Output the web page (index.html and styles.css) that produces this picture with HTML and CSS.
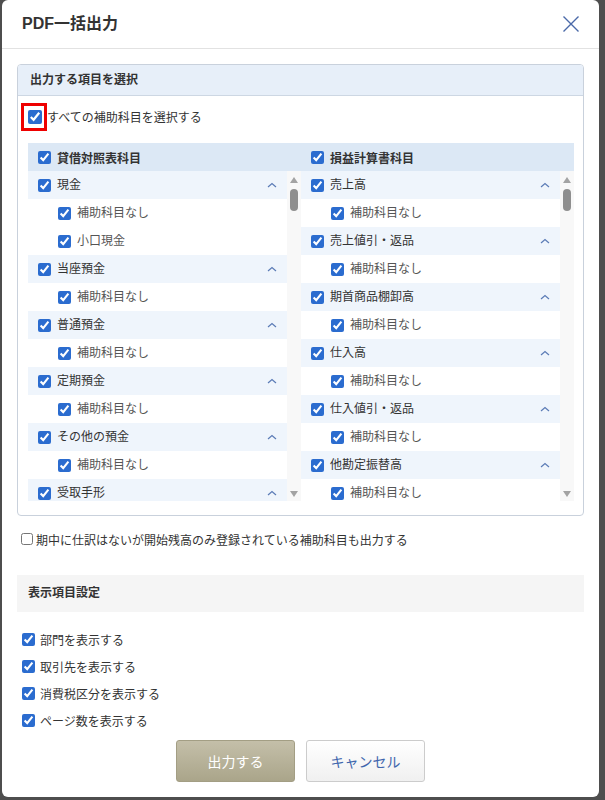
FILE: index.html
```html
<!DOCTYPE html>
<html lang="ja">
<head>
<meta charset="utf-8">
<title>PDF一括出力</title>
<link rel="stylesheet" href="styles.css">
</head>
<body>
<div class="modal">
  <div class="modal-header">
    <h1 class="modal-title">PDF一括出力</h1>
    <svg class="close" width="18" height="18" viewBox="0 0 18 18"><path d="M1.5 1.5 L16.5 16.5 M16.5 1.5 L1.5 16.5" stroke="#4a69a8" stroke-width="1.4" fill="none"/></svg>
  </div>
  <div class="modal-body">
    <div class="panel">
      <div class="panel-head">出力する項目を選択</div>
      <div class="select-all">
        <span class="highlight"><input type="checkbox" checked></span>
        <span class="label">すべての補助科目を選択する</span>
      </div>
      <div class="columns">
        <div class="col">
          <div class="col-head"><input type="checkbox" checked><span>貸借対照表科目</span></div>
          <div class="col-body">
            <div class="list">
              <div class="row group"><input type="checkbox" checked><span class="txt">現金</span><svg class="chev" width="10" height="6" viewBox="0 0 10 6"><polyline points="1,5 5,1.5 9,5" fill="none" stroke="#5b7cb6" stroke-width="1.2"/></svg></div>
              <div class="row child"><input type="checkbox" checked><span class="txt">補助科目なし</span></div>
              <div class="row child"><input type="checkbox" checked><span class="txt">小口現金</span></div>
              <div class="row group"><input type="checkbox" checked><span class="txt">当座預金</span><svg class="chev" width="10" height="6" viewBox="0 0 10 6"><polyline points="1,5 5,1.5 9,5" fill="none" stroke="#5b7cb6" stroke-width="1.2"/></svg></div>
              <div class="row child"><input type="checkbox" checked><span class="txt">補助科目なし</span></div>
              <div class="row group"><input type="checkbox" checked><span class="txt">普通預金</span><svg class="chev" width="10" height="6" viewBox="0 0 10 6"><polyline points="1,5 5,1.5 9,5" fill="none" stroke="#5b7cb6" stroke-width="1.2"/></svg></div>
              <div class="row child"><input type="checkbox" checked><span class="txt">補助科目なし</span></div>
              <div class="row group"><input type="checkbox" checked><span class="txt">定期預金</span><svg class="chev" width="10" height="6" viewBox="0 0 10 6"><polyline points="1,5 5,1.5 9,5" fill="none" stroke="#5b7cb6" stroke-width="1.2"/></svg></div>
              <div class="row child"><input type="checkbox" checked><span class="txt">補助科目なし</span></div>
              <div class="row group"><input type="checkbox" checked><span class="txt">その他の預金</span><svg class="chev" width="10" height="6" viewBox="0 0 10 6"><polyline points="1,5 5,1.5 9,5" fill="none" stroke="#5b7cb6" stroke-width="1.2"/></svg></div>
              <div class="row child"><input type="checkbox" checked><span class="txt">補助科目なし</span></div>
              <div class="row group"><input type="checkbox" checked><span class="txt">受取手形</span><svg class="chev" width="10" height="6" viewBox="0 0 10 6"><polyline points="1,5 5,1.5 9,5" fill="none" stroke="#5b7cb6" stroke-width="1.2"/></svg></div>
            </div>
            <div class="scrollbar"><span class="arrow-up"></span><span class="thumb"></span><span class="spacer"></span><span class="arrow-down"></span></div>
          </div>
        </div>
        <div class="col">
          <div class="col-head"><input type="checkbox" checked><span>損益計算書科目</span></div>
          <div class="col-body">
            <div class="list">
              <div class="row group"><input type="checkbox" checked><span class="txt">売上高</span><svg class="chev" width="10" height="6" viewBox="0 0 10 6"><polyline points="1,5 5,1.5 9,5" fill="none" stroke="#5b7cb6" stroke-width="1.2"/></svg></div>
              <div class="row child"><input type="checkbox" checked><span class="txt">補助科目なし</span></div>
              <div class="row group"><input type="checkbox" checked><span class="txt">売上値引・返品</span><svg class="chev" width="10" height="6" viewBox="0 0 10 6"><polyline points="1,5 5,1.5 9,5" fill="none" stroke="#5b7cb6" stroke-width="1.2"/></svg></div>
              <div class="row child"><input type="checkbox" checked><span class="txt">補助科目なし</span></div>
              <div class="row group"><input type="checkbox" checked><span class="txt">期首商品棚卸高</span><svg class="chev" width="10" height="6" viewBox="0 0 10 6"><polyline points="1,5 5,1.5 9,5" fill="none" stroke="#5b7cb6" stroke-width="1.2"/></svg></div>
              <div class="row child"><input type="checkbox" checked><span class="txt">補助科目なし</span></div>
              <div class="row group"><input type="checkbox" checked><span class="txt">仕入高</span><svg class="chev" width="10" height="6" viewBox="0 0 10 6"><polyline points="1,5 5,1.5 9,5" fill="none" stroke="#5b7cb6" stroke-width="1.2"/></svg></div>
              <div class="row child"><input type="checkbox" checked><span class="txt">補助科目なし</span></div>
              <div class="row group"><input type="checkbox" checked><span class="txt">仕入値引・返品</span><svg class="chev" width="10" height="6" viewBox="0 0 10 6"><polyline points="1,5 5,1.5 9,5" fill="none" stroke="#5b7cb6" stroke-width="1.2"/></svg></div>
              <div class="row child"><input type="checkbox" checked><span class="txt">補助科目なし</span></div>
              <div class="row group"><input type="checkbox" checked><span class="txt">他勘定振替高</span><svg class="chev" width="10" height="6" viewBox="0 0 10 6"><polyline points="1,5 5,1.5 9,5" fill="none" stroke="#5b7cb6" stroke-width="1.2"/></svg></div>
              <div class="row child"><input type="checkbox" checked><span class="txt">補助科目なし</span></div>
            </div>
            <div class="scrollbar"><span class="arrow-up"></span><span class="thumb"></span><span class="spacer"></span><span class="arrow-down"></span></div>
          </div>
        </div>
      </div>
    </div>

    <label class="opt-row"><input type="checkbox"><span>期中に仕訳はないが開始残高のみ登録されている補助科目も出力する</span></label>

    <div class="section-head">表示項目設定</div>

    <div class="display-list">
      <label class="disp-row"><input type="checkbox" checked><span>部門を表示する</span></label>
      <label class="disp-row"><input type="checkbox" checked><span>取引先を表示する</span></label>
      <label class="disp-row"><input type="checkbox" checked><span>消費税区分を表示する</span></label>
      <label class="disp-row"><input type="checkbox" checked><span>ページ数を表示する</span></label>
    </div>

    <div class="buttons">
      <button class="btn btn-primary">出力する</button>
      <button class="btn btn-cancel">キャンセル</button>
    </div>
  </div>
</div>
</body>
</html>
```

FILE: styles.css
```css
* { box-sizing: border-box; }

html, body {
  margin: 0;
  padding: 0;
}

body {
  background: #4e4e4e;
  font-family: "Liberation Sans", "Noto Sans CJK JP", sans-serif;
  color: #333;
  font-size: 12px;
  width: 605px;
  height: 800px;
  overflow: hidden;
}

input[type="checkbox"] {
  width: 13px;
  height: 13px;
  margin: 0;
  accent-color: #2b6ccf;
  flex: none;
}

.modal {
  margin-left: 2px;
  width: 597px;
  height: 797px;
  background: #fff;
  border-radius: 6px;
  display: flex;
  flex-direction: column;
}

.modal-header {
  height: 49px;
  border-bottom: 1px solid #e2e2e2;
  display: flex;
  align-items: center;
  justify-content: space-between;
  padding: 0 19px 0 20px;
}

.modal-title {
  margin: 0;
  font-size: 16px;
  font-weight: bold;
  color: #333;
  line-height: 20px;
}

.close { display: block; }

.modal-body {
  padding: 15px 15px 0;
  display: flex;
  flex-direction: column;
}

.panel {
  border: 1px solid #c9d1dc;
  border-radius: 4px;
  padding-bottom: 14px;
}

.panel-head {
  height: 31px;
  background: #e7eff9;
  border-bottom: 1px solid #cdd7e3;
  border-radius: 3px 3px 0 0;
  padding-left: 12px;
  font-weight: bold;
  font-size: 12px;
  line-height: 31px;
  color: #333;
}

.select-all {
  display: flex;
  align-items: center;
  padding: 7px 3px 0;
}

.highlight {
  display: flex;
  border: 3px solid #ee0000;
  padding: 4px 2px 4px 4px;
}

.highlight input {
  width: 14px;
  height: 14px;
}

.select-all .label {
  font-size: 12px;
  line-height: 16px;
  color: #333;
  position: relative;
  top: 1px;
}

.columns {
  margin: 12px 10px 0;
  display: grid;
  grid-template-columns: 273px 273px;
}

.col-head {
  height: 28px;
  background: #dce8f5;
  display: flex;
  align-items: center;
  gap: 6px;
  padding-left: 10px;
  font-weight: bold;
  font-size: 12px;
  color: #333;
}

.col-body {
  display: flex;
  height: 330px;
}

.list {
  flex: 1;
  overflow: hidden;
}

.row {
  height: 28px;
  display: flex;
  align-items: center;
  gap: 6px;
  font-size: 12px;
}

.row .txt { line-height: 16px; }

.group {
  background: #eff5fc;
  padding: 0 10px 0 10px;
  color: #333;
}

.group .chev {
  margin-left: auto;
  display: block;
}

.child {
  background: #fff;
  padding-left: 30px;
  color: #555;
}

.scrollbar {
  width: 14px;
  background: #f8f8f8;
  display: flex;
  flex-direction: column;
  align-items: center;
  padding: 6px 0 4px;
}

.arrow-up {
  width: 0;
  height: 0;
  border-left: 4px solid transparent;
  border-right: 4px solid transparent;
  border-bottom: 6px solid #a3a3a3;
}

.arrow-down {
  width: 0;
  height: 0;
  border-left: 4px solid transparent;
  border-right: 4px solid transparent;
  border-top: 6px solid #a3a3a3;
}

.thumb {
  margin-top: 6px;
  width: 8px;
  height: 22px;
  border-radius: 4px;
  background: #8f8f8f;
}

.spacer { flex: 1; }

.opt-row {
  display: flex;
  align-items: center;
  gap: 3px;
  margin-top: 14px;
  padding-left: 4px;
  height: 18px;
  font-size: 12px;
  color: #333;
}

.opt-row input { width: 12px; height: 12px; }

.section-head {
  margin-top: 27px;
  height: 37px;
  background: #f5f5f5;
  padding-left: 11px;
  font-weight: bold;
  font-size: 12px;
  line-height: 37px;
  color: #333;
}

.display-list {
  margin-top: 14px;
  display: flex;
  flex-direction: column;
}

.disp-row {
  height: 27px;
  display: flex;
  align-items: center;
  gap: 5px;
  padding-left: 5px;
  font-size: 12px;
  color: #333;
}

.buttons {
  margin-top: 6px;
  display: flex;
  justify-content: center;
  gap: 11px;
}

.btn {
  width: 119px;
  height: 42px;
  border-radius: 3px;
  font-family: "Liberation Sans", "Noto Sans CJK JP", sans-serif;
  font-size: 14px;
  cursor: pointer;
}

.btn-primary {
  background: linear-gradient(#c4bfa9, #aaa58a);
  border: 1px solid #a39e84;
  color: #fff;
}

.btn-cancel {
  background: linear-gradient(#ffffff, #f0f0f0);
  border: 1px solid #cccccc;
  color: #4066ad;
}
```
